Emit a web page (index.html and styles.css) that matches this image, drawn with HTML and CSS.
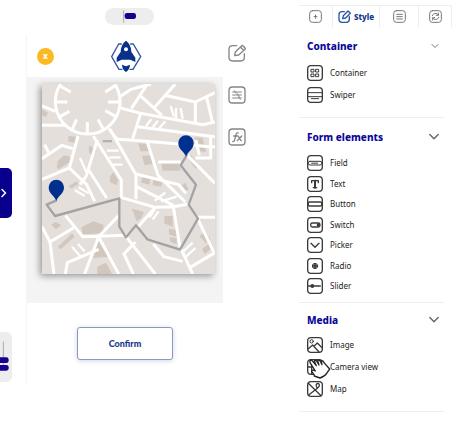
FILE: index.html
```html
<!DOCTYPE html>
<html lang="en">
<head>
    <meta charset="UTF-8">
    <meta name="viewport" content="width=device-width, initial-scale=1.0">
    <title>App builder</title>
    <link rel="stylesheet" href="styles.css">
</head>
<body>
    <div class="app">
        <div class="rail">
            <button class="rail-toggle" aria-label="Open menu">
                <svg viewBox="0 0 12 12" width="12" height="12"><path d="M2 2.5L5.5 6L2 9.5"/></svg>
            </button>
            <div class="rail-layout">
                <svg viewBox="0 0 36 150" width="12" height="50">
                    <path class="guide" d="M10 30V112"/>
                    <rect x="-8" y="76" width="34" height="17" rx="7"/>
                    <rect x="-8" y="99" width="34" height="17" rx="7"/>
                </svg>
            </div>
        </div>

        <main class="preview">
            <div class="switcher">
                <svg viewBox="0 0 147 51" width="49" height="17">
                    <path class="guide" d="M56 8V43"/>
                    <rect x="59" y="15" width="34" height="18" rx="7"/>
                </svg>
            </div>
            <div class="phone">
                <header class="phone-header">
                    <button class="close">x</button>
                    <svg class="logo" viewBox="330 115 96 96" width="32" height="32">
                        <path class="hex" d="M364 127H356L335 165L357 203H366M392 127H400L422 165L399 203H390"/>
                        <path d="M378 117C388 124 394 136 394 151L406 168V181L391 174H365L350 181V168L362 151C362 136 368 124 378 117Z"/>
                        <path d="M366 189L378 194L390 189C390 199 385 206 378 211C371 206 366 199 366 189Z"/>
                        <circle cx="378" cy="143" r="6"/>
                    </svg>
                </header>
                <div class="map-area">
                    <svg class="map" viewBox="18 12 519 570" role="img" aria-label="Route map">
                        <g class="blocks">
                            <path d="M18 88L36 98L30 112L18 106ZM98 168L120 170L116 188L96 184ZM62 262L66 242L84 226L102 230V246L68 268ZM160 196L182 212L168 230L158 214ZM306 190L332 192L340 214H314ZM318 228L344 226L350 252L326 256ZM376 250H428L434 272H380ZM454 232L466 226L488 258L478 266ZM476 172L500 174L504 194L480 192ZM484 200L508 202L510 216L490 214Z"/>
                            <path d="M222 290L232 276L246 300L242 316L222 306ZM318 292L344 296L340 314L316 308ZM352 298L378 304L376 320L350 316ZM438 316L448 308L458 328L448 336ZM288 386L324 396L316 414L302 424ZM386 408L410 408V440L384 430ZM398 446L422 450V470L400 464ZM400 472L422 474V492L404 486ZM490 468L504 458L524 478L510 490ZM498 508L520 490L532 500L506 522ZM136 442L172 424L202 434V458L166 462H140ZM46 434L60 426L76 436L60 448ZM66 500L108 460L116 470L74 508ZM186 482L218 530L172 534ZM184 560L210 548L228 582H184ZM98 318L122 304L128 312L104 326Z"/>
                            <path class="dark" d="M200 180H228V187H200Z"/>
                        </g>
                        <g class="roads">
                            <path d="M74 12A97 97 0 1 0 236 12"/>
                            <path d="M72 18L104 36M58 66H94M68 112L100 94M106 154L122 118M154 164V126M204 152L186 118M240 110L208 92M252 66H216M242 14L208 36"/>
                            <path d="M252 50L285 28L345 12M330 18L286 86M312 46L378 106M418 12L354 84M386 46L478 66V128M478 66L537 38M512 52L530 130"/>
                            <path d="M254 84L314 100L500 134L537 126M314 100L290 176M306 140L537 170M218 146L244 178L332 184L520 200"/>
                            <path d="M222 148L300 284V358M172 168L256 300V356M18 78L58 94M18 136H88M126 168L100 264L18 298M18 236L78 196L110 206M40 222L26 194M100 264L152 314L176 364M184 180L150 290L132 314M158 270L212 354"/>
                            <path d="M334 186L366 286L448 366M300 282L428 314L450 340M366 246H434M454 226L537 310M524 166V234L478 234M490 226L480 180M520 200H537"/>
                            <path d="M88 406L140 470L272 466M250 404L188 470L146 582M188 470L248 582M18 440L42 486L112 444M42 486L54 582M88 582L94 548L188 508"/>
                            <path d="M254 352L358 382L412 380L458 372M358 382L306 440M412 380L432 502M302 320L412 376"/>
                            <path d="M272 472L358 582M298 486L264 522L292 582M352 492L384 530L440 544M436 508L470 582M462 562L537 518M486 418L537 524M484 412H537"/>
                            <path class="lane" d="M330 138L346 118M350 142L366 122M370 144L388 124M404 78L414 110M420 84V116M434 84L440 116M212 212H248M220 232H254M228 254H260M132 234L154 282M116 330L146 348M128 322L158 340M108 500L134 530M126 492L146 514M356 362L388 338M376 364L422 350M340 412L356 388M350 418L368 394M440 516L470 488M448 532L478 504"/>
                        </g>
                        <path class="route" d="M60 362L32 374L57 408L250 355V440L270 472L300 436L334 478L432 509L486 416L458 374L480 314L434 256L452 226"/>
                        <path class="pin" d="M450 229C442 212 427 208 427 189A23 23 0 0 1 473 189C473 208 458 212 450 229Z"/>
                        <path class="pin" d="M61 362C53 345 38 341 38 322A23 23 0 0 1 84 322C84 341 69 345 61 362Z"/>
                    </svg>
                </div>
                <footer class="phone-footer">
                    <button class="confirm">Confirm</button>
                </footer>
            </div>
        </main>

        <nav class="tools">
            <button aria-label="Edit">
                <svg viewBox="0 0 54 54" width="18" height="18"><path d="M26 5H14Q3 5 3 16V40Q3 51 14 51H38Q49 51 49 40V29M20 35L22 24L43 4L53 14L32 33ZM38 10L47 19"/></svg>
            </button>
            <button aria-label="Settings">
                <svg viewBox="0 0 54 54" width="18" height="18"><rect x="3" y="3" width="48" height="48" rx="10"/><path class="thin" d="M14 18H40M14 27H40M14 36H40M19 14L24 21M28 23L33 31M32 32L37 40"/></svg>
            </button>
            <button aria-label="Formula">
                <svg viewBox="0 0 54 54" width="18" height="18"><rect x="3" y="3" width="48" height="48" rx="10"/><path d="M14 41C20 42 20 36 22 28S24 13 30 15M17 24H28M29 24C34 23 35 38 40 38M41 24L28 38"/></svg>
            </button>
        </nav>

        <aside class="panel">
            <div class="tabs">
                <button aria-label="Add">
                    <svg viewBox="0 0 39 39" width="13" height="13"><rect x="2" y="2" width="35" height="35" rx="8"/><path d="M15 20H24M19.500 15V25"/></svg>
                </button>
                <button class="active">
                    <svg viewBox="0 0 39 39" width="13" height="13"><path d="M19 5H12Q3 5 3 14V28Q3 37 12 37H25Q34 37 34 28V20M14 26L16 17L30 3L37 10L23 24Z"/></svg>
                    Style
                </button>
                <button aria-label="Content">
                    <svg viewBox="0 0 39 39" width="13" height="13"><rect x="2" y="2" width="35" height="35" rx="8"/><path d="M11 13H28M11 20H28M11 27H28"/></svg>
                </button>
                <button aria-label="Refresh">
                    <svg viewBox="0 0 39 39" width="13" height="13"><rect x="2" y="2" width="35" height="35" rx="8"/><path d="M10 17C12 9 24 8 28 15M28 9V16H22M29 22C27 30 15 31 11 24M11 30V23H17"/></svg>
                </button>
            </div>

            <section class="group">
                <h2><button>Container <svg class="chevron" viewBox="0 0 10 10" width="10" height="10"><path d="M2 3.500L5 6.500L8 3.500"/></svg></button></h2>
                <ul>
                    <li><svg viewBox="0 0 48 48" width="16" height="16"><rect x="2" y="2" width="44" height="44" rx="10"/><path class="thin" d="M13 13H21V21H13ZM27 13H35V21H27ZM13 27H21V35H13ZM27 27H35V35H27Z"/></svg>Container</li>
                    <li><svg viewBox="0 0 48 48" width="16" height="16"><rect x="2" y="2" width="44" height="44" rx="10"/><path class="thin" d="M3 17H45M3 29H45M13 35H35"/></svg>Swiper</li>
                </ul>
            </section>

            <section class="group form-elements">
                <h2><button>Form elements <svg class="chevron big" viewBox="0 0 10 10" width="12" height="12"><path d="M1.500 3L5 6.500L8.500 3"/></svg></button></h2>
                <ul>
                    <li><svg viewBox="0 0 48 48" width="16" height="16"><rect x="2" y="2" width="44" height="44" rx="10"/><rect class="thin" x="4" y="19" width="40" height="11" rx="5"/><path class="thin" d="M14 24.500H32"/></svg>Field</li>
                    <li><svg viewBox="0 0 48 48" width="16" height="16"><rect x="2" y="2" width="44" height="44" rx="10"/><path d="M14 20V14H34V20M19 35H29"/><path class="stem" d="M24 14V35"/></svg>Text</li>
                    <li><svg viewBox="0 0 48 48" width="16" height="16"><rect x="2" y="2" width="44" height="44" rx="10"/><rect x="4" y="18" width="40" height="12" rx="4"/></svg>Button</li>
                    <li><svg viewBox="0 0 48 48" width="16" height="16"><rect x="2" y="2" width="44" height="44" rx="10"/><rect x="11" y="18" width="28" height="12" rx="5"/><circle class="dot" cx="34" cy="24" r="5"/></svg>Switch</li>
                    <li><svg viewBox="0 0 48 48" width="16" height="16"><rect x="2" y="2" width="44" height="44" rx="10"/><path d="M12 19L24 31L36 19"/></svg>Picker</li>
                    <li><svg viewBox="0 0 48 48" width="16" height="16"><rect x="2" y="2" width="44" height="44" rx="10"/><circle class="thin" cx="24" cy="24" r="8"/><circle class="dot" cx="24" cy="24" r="6"/></svg>Radio</li>
                    <li><svg viewBox="0 0 48 48" width="16" height="16"><rect x="2" y="2" width="44" height="44" rx="10"/><path d="M5 24H40"/><circle class="dot" cx="16" cy="24" r="6"/></svg>Slider</li>
                </ul>
            </section>

            <section class="group media">
                <h2><button>Media <svg class="chevron big" viewBox="0 0 10 10" width="12" height="12"><path d="M1.500 3L5 6.500L8.500 3"/></svg></button></h2>
                <ul>
                    <li><svg viewBox="0 0 48 48" width="16" height="16"><rect x="2" y="2" width="44" height="44" rx="10"/><circle class="thin" cx="14" cy="13" r="5"/><path d="M3 36L17 24L36 45M21 28L31 18L45 32"/></svg>Image</li>
                    <li class="grabbed"><svg viewBox="0 0 48 48" width="16" height="16"><rect x="2" y="2" width="44" height="44" rx="10"/><path d="M3 24H45M14 3V45M30 10L44 4"/></svg>Camera view
                        <svg class="hand" viewBox="0 0 66 60" width="22" height="20"><path d="M3 6C5 1 9 3 12 8L22 20L16 7C17 2 21 3 24 8L30 18L26 6C28 1 32 3 35 9L39 17L37 8C39 3 43 6 45 11L62 30L53 43C49 50 42 54 33 57L16 51C16 45 12 43 8 37C9 33 13 32 19 36L5 14C3 11 2 9 3 6Z"/></svg>
                    </li>
                    <li><svg viewBox="0 0 48 48" width="16" height="16"><rect x="2" y="2" width="44" height="44" rx="10"/><path d="M4 7L42 44M5 42L31 22M31 22C27 17 26 14 28 10C32 5 38 8 37 14C36 17 33 19 31 22Z"/></svg>Map</li>
                </ul>
            </section>
        </aside>
    </div>
</body>
</html>
```
FILE: styles.css
```css
* { box-sizing: border-box; }
body { margin: 0; background: #fff; font-family: "Noto Sans", "Open Sans", sans-serif; font-size: 8px; line-height: 12px; color: #222; }
button { padding: 0; border: none; background: none; font: inherit; color: inherit; cursor: pointer; }
svg { display: block; flex: none; fill: none; stroke-linecap: round; stroke-linejoin: round; }
ul { list-style: none; margin: 0; padding: 0; }

.app { display: flex; align-items: flex-start; padding-right: 8px; }

/* left edge */
.rail { width: 12px; margin-right: 14px; padding-top: 168px; }
.rail-toggle { display: flex; align-items: center; width: 12px; height: 50px; background: #08008c; border-radius: 0 5px 5px 0; }
.rail-toggle svg { stroke: #fff; stroke-width: 1.5; }
.rail-layout { margin-top: 114px; background: #ededed; border-radius: 0 6px 6px 0; }
.rail rect, .switcher rect { fill: #17008f; }
.guide { stroke: #aaa; stroke-width: 3; }

/* phone preview */
.preview { flex: 1; padding-top: 8px; }
.switcher { width: 49px; margin: 0 auto 10px; background: #ededee; border-radius: 9px; position: relative; left: 5px; }
.phone { border-left: 1px solid #f5f5f5; }
.phone-header { display: grid; grid-template-columns: 1fr auto 1fr; align-items: center; height: 42px; padding: 0 8px 0 10px; }
.close { width: 17px; height: 17px; border-radius: 50%; background: #fdb924; color: #fff; font-weight: 800; line-height: 16px; }
.logo { fill: #08308c; }
.logo .hex { fill: none; stroke: #3455a0; stroke-width: 4; }
.logo circle { fill: #fff; }
.map-area { padding: 7px 8px 29px 15px; background: #f4f4f4; }
.map { width: 100%; height: auto; background: #e4dfda; box-shadow: -2px 2px 7px rgba(0,0,0,0.4); }
.blocks { fill: #d1c7be; }
.blocks .dark { fill: #b5b2af; }
.roads { stroke: #fff; stroke-width: 9; stroke-linecap: butt; }
.roads .lane { stroke-width: 7; }
.route { stroke: #a3a3a6; stroke-width: 7; }
.pin { fill: #00308f; }
.phone-footer { padding: 24px 0; text-align: center; }
.confirm { width: 96px; height: 33px; border: 1px solid #8a98c4; border-radius: 3px; background: #fff; box-shadow: 0 1px 5px rgba(40,50,120,0.2); color: #16368c; font-family: Lato, sans-serif; font-size: 9px; font-weight: 900; }

/* tool buttons beside the phone */
.tools { display: flex; flex-direction: column; gap: 24px; padding: 44px 0 0 5px; }
.tools svg { stroke: #858585; stroke-width: 4; }
.tools .thin { stroke-width: 3; }

/* element panel */
.panel { width: 153px; margin-left: 53px; padding-top: 5px; }
.tabs { display: grid; grid-template-columns: 34fr 47fr 39fr 33fr; height: 22px; border-top: 1px solid #eee; }
.tabs button { display: flex; align-items: center; justify-content: center; gap: 3px; border-right: 1px solid #eee; }
.tabs svg { stroke: #777; stroke-width: 3; }
.tabs .active { color: #12318f; font-weight: 800; }
.tabs .active svg { stroke: #2c56a4; stroke-width: 4; }
.group { width: 145px; padding: 10px 2px 14px 8px; border-bottom: 1px solid #eee; }
.group h2 { margin: 0 0 10px; font-size: 10px; line-height: 18px; }
.group h2 button { display: flex; align-items: center; justify-content: space-between; width: 100%; height: 18px; color: #0b0899; font-weight: 800; }
.group ul { display: flex; flex-direction: column; justify-content: space-between; gap: 6px; }
.group li { display: flex; align-items: center; gap: 7px; height: 16px; }
.group li svg { stroke: #3a3a3a; stroke-width: 4; }
.group li .thin { stroke-width: 3; }
.group li .stem { stroke-width: 6; }
.group li .dot { fill: #3a3a3a; stroke: none; }
.chevron { stroke: #777; stroke-width: 1; margin-right: 2px; }
.chevron.big { stroke: #666; stroke-width: 1.2; }
.form-elements { padding-bottom: 8px; }
.form-elements h2 { margin-bottom: 9px; }
.form-elements ul { gap: 4px; min-height: 139px; }
.media { padding-top: 8px; }
.media h2 { margin-bottom: 8px; }
.grabbed { position: relative; }
.group .hand { position: absolute; left: 2px; top: 0; fill: #fff; stroke: #222; stroke-width: 4; }
```
